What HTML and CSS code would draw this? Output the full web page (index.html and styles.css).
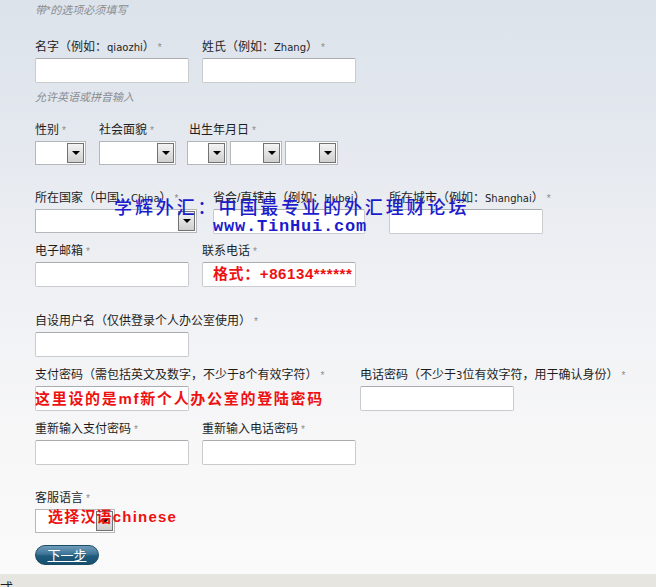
FILE: index.html
```html
<!DOCTYPE html>
<html lang="zh-CN">
<head>
  <meta charset="UTF-8" />
  <meta name="viewport" content="width=device-width, initial-scale=1" />
  <title>注册</title>
  <link rel="stylesheet" href="styles.css">
</head>
<body>
  <form class="reg-form" id="regForm">
    <p class="note note-top">带*的选项必须填写</p>

    <div class="row row-first">
      <div class="field">
        <label>名字（例如：<span class="lat">qiaozhi</span>）<i class="req">*</i></label>
        <input class="text" type="text" />
      </div>
      <div class="field">
        <label>姓氏（例如：<span class="lat">Zhang</span>）<i class="req">*</i></label>
        <input class="text" type="text" />
      </div>
    </div>
    <p class="note note-hint">允许英语或拼音输入</p>

    <div class="row row-selects">
      <div class="field field-auto">
        <label>性别<i class="req">*</i></label>
        <div class="select sel-gender"><span class="arrow"></span></div>
      </div>
      <div class="field field-auto">
        <label>社会面貌<i class="req">*</i></label>
        <div class="select sel-title"><span class="arrow"></span></div>
      </div>
      <div class="field field-auto">
        <label>出生年月日<i class="req">*</i></label>
        <div class="date-group">
          <div class="select sel-day"><span class="arrow"></span></div>
          <div class="select sel-month"><span class="arrow"></span></div>
          <div class="select sel-year"><span class="arrow"></span></div>
        </div>
      </div>
    </div>

    <div class="row row-place">
      <div class="field field-country">
        <label>所在国家（中国：<span class="lat">China</span>）<i class="req">*</i></label>
        <div class="select sel-country"><span class="arrow"></span></div>
      </div>
      <div class="field field-province">
        <label>省会/直辖市（例如：<span class="lat">Hubei</span>）</label>
        <input class="text" type="text" />
      </div>
      <div class="field field-city">
        <label>所在城市（例如：<span class="lat">Shanghai</span>）<i class="req">*</i></label>
        <input class="text" type="text" />
      </div>
    </div>

    <div class="row row-contact">
      <div class="field">
        <label>电子邮箱<i class="req">*</i></label>
        <input class="text" type="text" />
      </div>
      <div class="field">
        <label>联系电话<i class="req">*</i></label>
        <input class="text" type="text" />
      </div>
    </div>

    <div class="row row-user">
      <div class="field">
        <label>自设用户名（仅供登录个人办公室使用）<i class="req">*</i></label>
        <input class="text" type="text" />
      </div>
    </div>

    <div class="row row-pass">
      <div class="field field-paypass">
        <label>支付密码（需包括英文及数字，不少于<span class="lat">8</span>个有效字符）<i class="req">*</i></label>
        <input class="text" type="password" />
      </div>
      <div class="field">
        <label>电话密码（不少于<span class="lat">3</span>位有效字符，用于确认身份）<i class="req">*</i></label>
        <input class="text" type="password" />
      </div>
    </div>

    <div class="row row-repass">
      <div class="field">
        <label>重新输入支付密码<i class="req">*</i></label>
        <input class="text" type="password" />
      </div>
      <div class="field">
        <label>重新输入电话密码<i class="req">*</i></label>
        <input class="text" type="password" />
      </div>
    </div>

    <div class="row row-lang">
      <div class="field">
        <label>客服语言<i class="req">*</i></label>
        <div class="select sel-lang"><span class="arrow"></span></div>
      </div>
    </div>

    <button class="next-btn" type="button">下一步</button>

    <!-- notes written over the screenshot -->
    <span class="mark mark-site">学辉外汇：中国最专业的外汇理财论坛</span>
    <span class="mark mark-url">www.TinHui.com</span>
    <span class="mark red mark-phone">格式：+86134******</span>
    <span class="mark red mark-pass">这里设的是mf新个人办公室的登陆密码</span>
    <span class="mark red mark-lang">选择汉语chinese</span>
  </form>

  <div class="footer">式</div>
</body>
</html>
```

FILE: styles.css
```css
:root {
  --text: #1e1e1e;
  --muted: #8a8c90;
  --border: #c9cbcf;
  --border-top: #a9abae;
  --blue: #1c1ccc;
  --red: #ee1111;
}
html, body {
  margin: 0;
  padding: 0;
}
body {
  font-family: "Liberation Sans", "Noto Sans CJK SC", sans-serif;
  font-size: 12px;
  color: var(--text);
  background: linear-gradient(#dde3eb 0, #e2e7ee 110px, #e9ecf1 200px, #f1f2f5 320px, #f7f7f8 440px, #fafafa 574px);
  height: 587px;
  overflow: hidden;
}
.reg-form {
  position: relative;
  padding-left: 35px;
  height: 574px;
}
.note {
  margin: 0;
  height: 16px;
  font-style: italic;
  color: var(--muted);
  font-size: 11px;
  line-height: 16px;
}
.note-top {
  padding-top: 2px;
}
.note-hint {
  margin-top: 6px;
}
.row {
  display: flex;
  gap: 13px;
}
.row-first { margin-top: 21px; }
.row-selects { margin-top: 17px; }
.row-place { margin-top: 25px; }
.row-contact { margin-top: 9px; }
.row-user { margin-top: 26px; }
.row-pass { margin-top: 10px; }
.row-repass { margin-top: 10px; }
.row-lang { margin-top: 25px; }

.field {
  display: flex;
  flex-direction: column;
  width: 154px;
}
.field-auto {
  width: auto;
}
label {
  display: block;
  height: 16px;
  line-height: 16px;
  margin-bottom: 3px;
  white-space: nowrap;
}
.lat {
  font-family: "DejaVu Sans", sans-serif;
  font-size: 10px;
  line-height: 1;
}
.req {
  font-style: normal;
  color: #8d8d8d;
  font-size: 10px;
  line-height: 1;
  margin-left: 3px;
}
.text {
  width: 154px;
  height: 25px;
  box-sizing: border-box;
  border: 1px solid var(--border);
  border-top-color: var(--border-top);
  border-radius: 2px;
  background: #fff;
  margin: 0;
  padding: 2px 4px;
}

/* drawn dropdowns */
.select {
  height: 24px;
  box-sizing: border-box;
  border: 1px solid #b5b7ba;
  background: #fff;
  display: flex;
  justify-content: flex-end;
  padding: 1px;
}
.arrow {
  width: 15px;
  border: 1px solid #727272;
  background: linear-gradient(#f4f4f4, #cfcfcf);
  display: flex;
  align-items: center;
  justify-content: center;
}
.arrow::after {
  content: "";
  border-left: 4px solid transparent;
  border-right: 4px solid transparent;
  border-top: 4px solid #000;
}
.row-selects { gap: 0; }
.sel-gender { width: 51px; margin-right: 13px; }
.sel-title { width: 77px; margin-right: 13px; }
.date-group {
  display: flex;
  gap: 3px;
}
.sel-day { width: 40px; margin-left: -2px; }
.sel-month { width: 52px; }
.sel-year { width: 53px; }
.field-country { width: 162px; }
.sel-country { width: 162px; }
.field-province { margin-left: 3px; width: 152px; }
.field-province .text { width: 152px; }
.field-city { margin-left: 11px; }
.field-paypass { width: 312px; }
.sel-lang { width: 80px; }

.next-btn {
  display: block;
  margin-top: 12px;
  width: 64px;
  height: 20px;
  border: 1px solid #1a4c66;
  border-radius: 10px;
  background: linear-gradient(#6f9cb9 0, #3e7598 45%, #1f5b7c 55%, #17506f 100%);
  color: #fff;
  font-family: "Noto Sans CJK SC", sans-serif;
  font-size: 13px;
  line-height: 16px;
  text-decoration: underline;
  padding: 0;
  cursor: pointer;
}

/* overlaid annotations */
.mark {
  position: absolute;
  white-space: nowrap;
  font-weight: bold;
}
.mark-site {
  left: 114px;
  top: 194px;
  color: var(--blue);
  font-family: "Noto Sans CJK SC", sans-serif;
  font-weight: 500;
  font-size: 18px;
  letter-spacing: 2.9px;
  line-height: 24px;
}
.mark-url {
  left: 213px;
  top: 216px;
  color: var(--blue);
  font-family: "Liberation Mono", monospace;
  font-size: 17px;
  letter-spacing: 0.8px;
  line-height: 22px;
}
.red {
  color: var(--red);
  font-family: "Liberation Sans", "Noto Sans CJK SC", sans-serif;
}
.mark-phone {
  left: 213px;
  top: 264px;
  font-size: 15px;
  letter-spacing: 0.6px;
  line-height: 20px;
}
.mark-pass {
  left: 35px;
  top: 389px;
  font-size: 15px;
  letter-spacing: 1.7px;
  line-height: 20px;
}
.mark-lang {
  left: 48px;
  top: 507px;
  font-size: 15px;
  letter-spacing: 1.2px;
  line-height: 20px;
}

.footer {
  height: 13px;
  background: #e6e5e0;
  font-family: "Noto Sans CJK SC", sans-serif;
  font-size: 13px;
  line-height: 26px;
  overflow: hidden;
}
```
